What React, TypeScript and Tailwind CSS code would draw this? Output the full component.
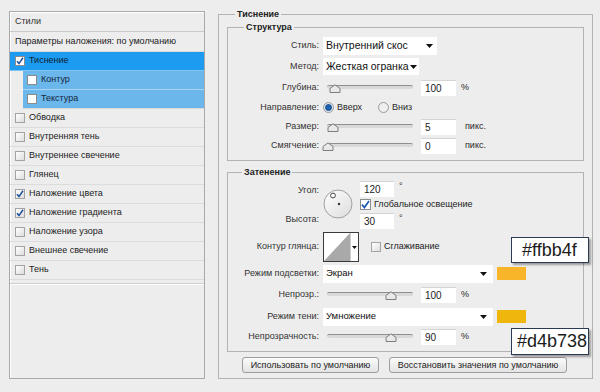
import React from "react";

const styleRows = [
  { label: "Обводка", checked: false },
  { label: "Внутренняя тень", checked: false },
  { label: "Внутреннее свечение", checked: false },
  { label: "Глянец", checked: false },
  { label: "Наложение цвета", checked: true },
  { label: "Наложение градиента", checked: true },
  { label: "Наложение узора", checked: false },
  { label: "Внешнее свечение", checked: false },
  { label: "Тень", checked: false },
];

const Check = ({ checked, light }: { checked?: boolean; light?: boolean }) => (
  <span
    className={
      light
        ? "w-[10px] h-[10px] shrink-0 border border-[#8c8c8c] bg-white flex items-center justify-center"
        : "w-[10px] h-[10px] shrink-0 border border-[#a3a3a3] bg-linear-to-br from-white to-[#dedede] flex items-center justify-center"
    }
  >
    {checked && (
      <svg width="8" height="8" viewBox="0 0 8 8">
        <path d="M1 4.2 L3 6.6 L7 0.8" stroke="#1d4f9a" strokeWidth="1.5" fill="none" />
      </svg>
    )}
  </span>
);

const Arrow = () => (
  <svg width="7" height="4" viewBox="0 0 7 4" className="shrink-0">
    <path d="M0 0 H7 L3.5 4 Z" fill="#111" />
  </svg>
);

const Slider = ({ pos }: { pos: number }) => (
  <div className="relative w-[86px] h-[14px] ml-[4px] shrink-0">
    <div className="absolute left-0 right-0 top-[4px] h-[4px] rounded-full bg-[#d9d9d9] border-t border-[#8f8f8f]" />
    <svg
      width="12"
      height="9"
      viewBox="0 0 12 9"
      className="absolute top-[3px]"
      style={{ left: pos - 6 }}
    >
      <path d="M1 8.5 V4.5 L6 0.8 L11 4.5 V8.5 Z" fill="#e9e9e9" stroke="#7d7d7d" strokeWidth="1" />
    </svg>
  </div>
);

const Field = ({ value, wide }: { value: string; wide?: boolean }) => (
  <div
    className={
      wide
        ? "w-[35px] h-[16px] bg-white border-t border-[#d4d4d4] pl-[4px] flex items-center text-[10px] text-[#222] shrink-0"
        : "w-[34px] h-[16px] bg-white border-t border-[#d4d4d4] pl-[4px] flex items-center text-[10px] text-[#222] shrink-0"
    }
  >
    {value}
  </div>
);

const Row = ({
  label,
  h,
  children,
}: {
  label: string;
  h: string;
  children: React.ReactNode;
}) => (
  <div className={`flex items-center ${h}`}>
    <div className="w-[91px] text-right whitespace-nowrap text-[#333]">{label}</div>
    <div className="ml-[4px] flex items-center">{children}</div>
  </div>
);

const Radio = ({ on }: { on?: boolean }) => (
  <svg width="11" height="11" viewBox="0 0 11 11" className="shrink-0">
    <circle cx="5.5" cy="5.5" r="5" fill={on ? "#dbe9f6" : "#efefef"} stroke="#9a9a9a" />
    {on && <circle cx="5.5" cy="5.5" r="3" fill="#1f63b5" stroke="#123c70" strokeWidth="0.8" />}
  </svg>
);

const Swatch = ({ color }: { color: string }) => (
  <div className={`ml-[4px] w-[29px] h-[13px] ${color}`} />
);

export default function App() {
  return (
    <div className="w-[600px] h-[392px] bg-[#ededed] flex items-start relative overflow-hidden font-['Liberation_Sans',Arial,sans-serif] text-[9px] text-[#2a2a2a]">
      {/* styles list */}
      <div className="ml-[9px] mt-[11px] w-[196px] h-[368px] border border-[#a9a9a9] shadow-[inset_1px_1px_0_#fff] flex flex-col">
        <div className="h-[20px] flex items-center pl-[5px] border-b border-[#c9c9c9] text-[#333]">Стили</div>
        <div className="h-[20px] flex items-center pl-[5px] border-b border-[#dadada] text-[#222]">
          Параметры наложения: по умолчанию
        </div>
        <div className="h-[19px] flex items-center pl-[5px] bg-[#1c9bf1] border-b border-[#7fc4f3] text-[#0b1d33]">
          <Check checked light />
          <span className="ml-[4px]">Тиснение</span>
        </div>
        <div className="h-[19px] ml-[13px] flex items-center pl-[4px] bg-[#6bb7ec] border-b border-[#a9d4f2] text-[#13263a]">
          <Check light />
          <span className="ml-[4px]">Контур</span>
        </div>
        <div className="h-[19px] ml-[13px] flex items-center pl-[4px] bg-[#6bb7ec] border-b border-[#dadada] text-[#13263a]">
          <Check light />
          <span className="ml-[4px]">Текстура</span>
        </div>
        {styleRows.map((r) => (
          <div key={r.label} className="h-[19px] flex items-center pl-[5px] border-b border-[#dcdcdc] text-[#222]">
            <Check checked={r.checked} />
            <span className="ml-[4px]">{r.label}</span>
          </div>
        ))}
        <div className="mt-[3px] border-t border-[#cfcfcf] shadow-[0_1px_0_#fff]" />
      </div>

      {/* options */}
      <fieldset className="ml-[13px] mt-[8px] w-[375px] min-w-0 m-0 border border-[#b3b3b3] px-[8px] pt-[1px] pb-[5px]">
        <legend className="ml-[8px] px-[2px] font-bold leading-[12px] text-[#222]">Тиснение</legend>

        <fieldset className="min-w-0 m-0 border border-[#b3b3b3] px-0 pt-[3px] pb-[6px]">
          <legend className="ml-[16px] px-[2px] font-bold leading-[12px] text-[#222]">Структура</legend>
          <Row label="Стиль:" h="h-[20px]">
            <div className="w-[114px] h-[18px] bg-white flex items-center justify-between pl-[3px] pr-[4px] text-[10.5px] text-[#111]">
              <span>Внутренний скос</span>
              <Arrow />
            </div>
          </Row>
          <Row label="Метод:" h="h-[21px]">
            <div className="w-[96px] h-[17px] bg-white flex items-center pl-[3px] text-[10.5px] text-[#111] whitespace-nowrap">
              <span>Жесткая огранка</span>
              <span className="ml-[1px]"><Arrow /></span>
            </div>
          </Row>
          <Row label="Глубина:" h="h-[22px]">
            <Slider pos={8} />
            <div className="ml-[8px]"><Field value="100" wide /></div>
            <span className="ml-[5px]">%</span>
          </Row>
          <Row label="Направление:" h="h-[17px]">
            <Radio on />
            <span className="ml-[3px] w-[41px]">Вверх</span>
            <Radio />
            <span className="ml-[3px]">Вниз</span>
          </Row>
          <Row label="Размер:" h="h-[21px]">
            <Slider pos={6} />
            <div className="ml-[8px]"><Field value="5" wide /></div>
            <span className="ml-[9px]">пикс.</span>
          </Row>
          <Row label="Смягчение:" h="h-[17px]">
            <Slider pos={1} />
            <div className="ml-[8px]"><Field value="0" wide /></div>
            <span className="ml-[9px]">пикс.</span>
          </Row>
        </fieldset>

        <fieldset className="mt-[5px] min-w-0 m-0 border border-[#b3b3b3] px-0 pt-[1px] pb-[4px]">
          <legend className="ml-[14px] px-[2px] font-bold leading-[12px] text-[#222]">Затенение</legend>
          <div className="flex h-[52px]">
            <div className="w-[91px] flex flex-col items-end pt-[5px] text-[#333]">
              <span className="leading-[12px]">Угол:</span>
              <span className="leading-[12px] mt-[17px]">Высота:</span>
            </div>
            <div className="ml-[4px] w-[37px] pt-[10px]">
              <svg width="30" height="30" viewBox="0 0 30 30">
                <defs>
                  <linearGradient id="dial" x1="0" y1="0" x2="1" y2="1">
                    <stop offset="0" stopColor="#ffffff" />
                    <stop offset="1" stopColor="#dcdcdc" />
                  </linearGradient>
                </defs>
                <circle cx="15" cy="15" r="14" fill="url(#dial)" stroke="#a0a0a0" />
                <circle cx="10" cy="6.5" r="2.4" fill="#fff" stroke="#333" strokeWidth="0.9" />
                <circle cx="16" cy="15" r="1.2" fill="#333" />
              </svg>
            </div>
            <div className="flex flex-col pt-[2px]">
              <div className="flex items-start">
                <Field value="120" />
                <span className="ml-[5px] leading-[10px]">°</span>
              </div>
              <div className="h-[15px] flex items-center">
                <span className="w-[11px] h-[11px] border border-[#8c8c8c] bg-white flex items-center justify-center">
                  <svg width="9" height="9" viewBox="0 0 9 9">
                    <path d="M1 4.6 L3.4 7.6 L8 1" stroke="#1d5bb0" strokeWidth="1.7" fill="none" />
                  </svg>
                </span>
                <span className="ml-[3px] whitespace-nowrap text-[#222]">Глобальное освещение</span>
              </div>
              <div className="flex items-start mt-[1px]">
                <Field value="30" />
                <span className="ml-[5px] leading-[10px]">°</span>
              </div>
            </div>
          </div>
          <Row label="Контур глянца:" h="h-[32px]">
            <div className="w-[36px] h-[30px] border border-[#3a3a3a] bg-white flex">
              <svg width="26" height="28" viewBox="0 0 26 28" className="shrink-0">
                <path d="M0 28 L26 0 V28 Z" fill="#a9a9a9" />
              </svg>
              <div className="flex-1 border-l border-[#cfcfcf] flex items-center justify-center">
                <svg width="5" height="3" viewBox="0 0 5 3">
                  <path d="M0 0 H5 L2.5 3 Z" fill="#111" />
                </svg>
              </div>
            </div>
            <span className="ml-[12px]"><Check /></span>
            <span className="ml-[3px] text-[#222]">Сглаживание</span>
          </Row>
          <Row label="Режим подсветки:" h="h-[21px]">
            <div className="w-[170px] h-[18px] bg-white flex items-center justify-between pl-[3px] pr-[6px] text-[9.5px] text-[#111]">
              <span>Экран</span>
              <Arrow />
            </div>
            <Swatch color="bg-[#f8b52a]" />
          </Row>
          <Row label="Непрозр.:" h="h-[22px]">
            <Slider pos={64} />
            <div className="ml-[8px]"><Field value="100" wide /></div>
            <span className="ml-[5px]">%</span>
          </Row>
          <Row label="Режим тени:" h="h-[21px]">
            <div className="w-[170px] h-[18px] bg-white flex items-center justify-between pl-[3px] pr-[6px] text-[9.5px] text-[#111]">
              <span>Умножение</span>
              <Arrow />
            </div>
            <Swatch color="bg-[#efb70b]" />
          </Row>
          <Row label="Непрозрачность:" h="h-[20px]">
            <Slider pos={64} />
            <div className="ml-[8px]"><Field value="90" wide /></div>
            <span className="ml-[5px]">%</span>
          </Row>
        </fieldset>

        <div className="flex mt-[5px] pl-[15px] gap-[10px]">
          <button className="w-[137px] h-[16px] rounded-[3px] border border-[#9d9d9d] bg-linear-to-b from-[#fbfbfb] to-[#e3e3e3] text-[9px] text-[#222] leading-none">
            Использовать по умолчанию
          </button>
          <button className="w-[178px] h-[16px] rounded-[3px] border border-[#9d9d9d] bg-linear-to-b from-[#fbfbfb] to-[#e3e3e3] text-[9px] text-[#222] leading-none">
            Восстановить значения по умолчанию
          </button>
        </div>
      </fieldset>

      {/* colour callouts */}
      <div className="absolute left-[511px] top-[237px] w-[78px] h-[26px] bg-white border border-[#2a3b52] shadow-[2px_2px_2px_rgba(0,0,0,0.35)] flex items-center pl-[10px] text-[18px] text-[#1b1b1b]">
        #ffbb4f
      </div>
      <div className="absolute left-[511px] top-[328px] w-[78px] h-[27px] bg-white border border-[#2a3b52] shadow-[2px_2px_2px_rgba(0,0,0,0.35)] flex items-center pl-[5px] text-[18px] text-[#1b1b1b]">
        #d4b738
      </div>
    </div>
  );
}
